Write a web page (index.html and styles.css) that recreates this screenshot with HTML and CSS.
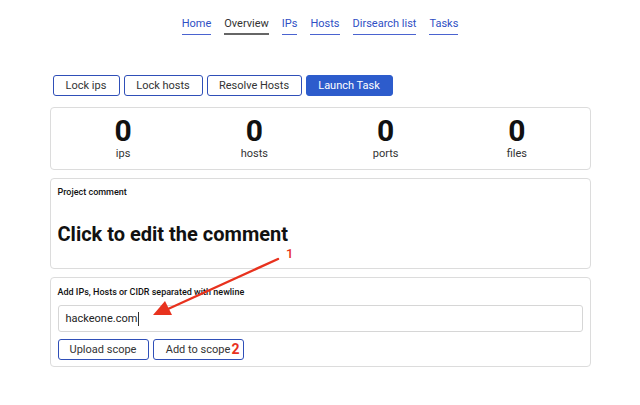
FILE: index.html
```html
<!DOCTYPE html>
<html>
<head>
<meta charset="utf-8">
<link rel="stylesheet" href="styles.css">
</head>
<body>
<nav class="nav">
  <a class="nav-link">Home</a>
  <a class="nav-link active">Overview</a>
  <a class="nav-link">IPs</a>
  <a class="nav-link">Hosts</a>
  <a class="nav-link">Dirsearch list</a>
  <a class="nav-link">Tasks</a>
</nav>
<main class="container">
  <div class="actions">
    <button class="btn">Lock ips</button>
    <button class="btn">Lock hosts</button>
    <button class="btn">Resolve Hosts</button>
    <button class="btn btn-primary">Launch Task</button>
  </div>
  <section class="card stats">
    <div class="stat"><div class="stat-num">0</div><div class="stat-label">ips</div></div>
    <div class="stat"><div class="stat-num">0</div><div class="stat-label">hosts</div></div>
    <div class="stat"><div class="stat-num">0</div><div class="stat-label">ports</div></div>
    <div class="stat"><div class="stat-num">0</div><div class="stat-label">files</div></div>
  </section>
  <section class="card comment">
    <div class="card-title">Project comment</div>
    <div class="comment-text">Click to edit the comment</div>
  </section>
  <section class="card scope">
    <div class="card-title">Add IPs, Hosts or CIDR separated with newline</div>
    <div class="input"><span>hackeone.com</span><span class="caret"></span></div>
    <div class="scope-actions">
      <button class="btn btn-wide">Upload scope</button>
      <button class="btn btn-wide">Add to scope<span class="mark mark-2">2</span></button>
    </div>
  </section>
</main>
<svg class="annot" width="640" height="405" viewBox="0 0 640 405">
  <line x1="278" y1="259" x2="168" y2="309" stroke="#e8321e" stroke-width="2.4" stroke-linecap="round"/>
  <polygon points="153,315 165,301 172,315" fill="#e8321e"/>
  <text x="286" y="258" class="mark-text">1</text>
</svg>
</body>
</html>
```
FILE: styles.css
```css
* { box-sizing: border-box; }
html, body { margin: 0; padding: 0; background: #fff; }
body {
  font-family: Roboto, "Liberation Sans", sans-serif;
  color: #111;
  width: 640px;
  height: 405px;
  position: relative;
  overflow: hidden;
}
.nav {
  display: flex;
  justify-content: center;
  gap: 13px;
  padding-top: 17px;
}
.nav-link {
  font-size: 11px;
  color: #2f4fc4;
  line-height: 14px;
  padding-bottom: 2px;
  border-bottom: 1px solid #4a63d0;
  cursor: pointer;
}
.nav-link.active {
  color: #333;
  border-bottom: 2px solid #666;
}
.container {
  width: 541px;
  margin: 40px auto 0;
}
.actions {
  display: flex;
  gap: 4px;
  padding-left: 3px;
  margin-bottom: 11px;
}
.btn {
  font-family: Roboto, "Liberation Sans", sans-serif;
  font-size: 11px;
  color: #333;
  background: #fff;
  border: 1px solid #2f4fb8;
  border-radius: 3px;
  height: 21px;
  padding: 0 12px;
  line-height: 19px;
  cursor: pointer;
}
.actions .btn:nth-child(1) { width: 67px; padding: 0; }
.actions .btn:nth-child(2) { width: 79px; padding: 0; }
.actions .btn:nth-child(3) { width: 95px; padding: 0; }
.actions .btn:nth-child(4) { width: 87px; padding: 0; }
.btn-primary {
  background: #2d5ccc;
  border-color: #2d5ccc;
  color: #fff;
}
.card {
  border: 1px solid #dcdcdc;
  border-radius: 4px;
  margin-bottom: 8px;
}
.stats {
  display: grid;
  grid-template-columns: repeat(4, 1fr);
  padding: 7px 7px 8px;
  height: 63px;
}
.stat { text-align: center; }
.stat-num {
  font-size: 30px;
  font-weight: 700;
  line-height: 32px;
  color: #111;
}
.stat-label {
  font-size: 11px;
  color: #333;
  line-height: 14px;
}
.comment {
  height: 91px;
  padding: 7px 7px;
}
.card-title {
  font-size: 9px;
  font-weight: 500;
  color: #111;
  line-height: 12px;
}
.comment-text {
  font-size: 20px;
  font-weight: 700;
  margin-top: 24px;
  line-height: 24px;
}
.scope {
  height: 90px;
  padding: 8px 7px;
}
.input {
  margin-top: 7px;
  height: 27px;
  border: 1px solid #d6d6d6;
  border-radius: 3px;
  padding: 0 7px;
  font-size: 11px;
  line-height: 25px;
  color: #222;
  display: flex;
  align-items: center;
}
.caret {
  display: inline-block;
  width: 1px;
  height: 14px;
  background: #333;
  margin-left: 1px;
}
.scope-actions {
  display: flex;
  gap: 4px;
  margin-top: 7px;
}
.btn-wide { width: 91px; padding: 0; position: relative; }
.mark {
  color: #e8321e;
  font-weight: 700;
  font-size: 14px;
}
.mark-2 { position: absolute; right: 3px; top: 0; line-height: 19px; }
.annot {
  position: absolute;
  left: 0;
  top: 0;
  pointer-events: none;
}
.mark-text {
  fill: #e8321e;
  font-family: Roboto, "Liberation Sans", sans-serif;
  font-weight: 500;
  font-size: 13px;
}
```
